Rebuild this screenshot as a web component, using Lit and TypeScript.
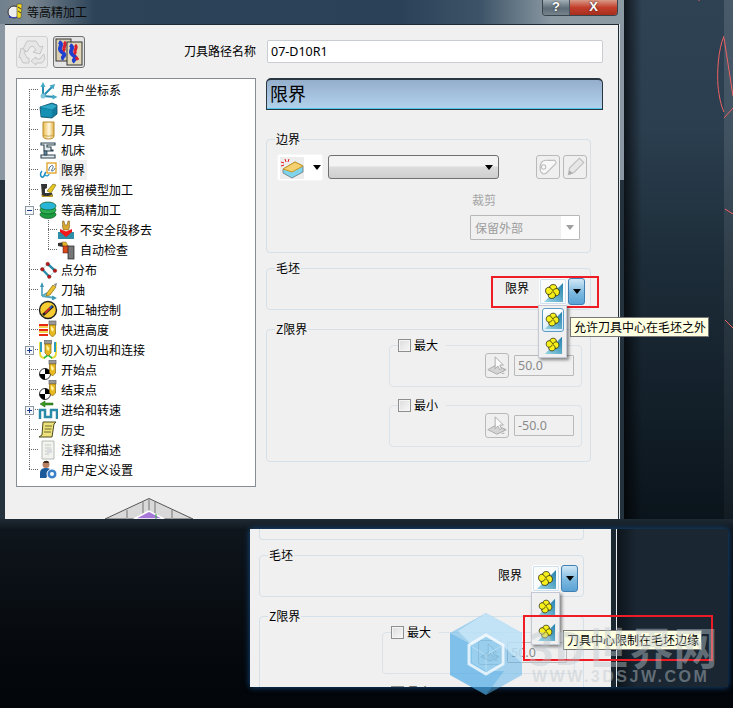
import { LitElement, html, css, svg } from "lit";
import { customElement } from "lit/decorators.js";
import { classMap } from "lit/directives/class-map.js";

const toolBit = (x = 0, y = 0) => svg`<g transform="translate(${x} ${y})"><rect x="3" y="0" width="7" height="4" fill="#9a9a9a" stroke="#555" stroke-width=".6"/><path d="M3.5 4h6v9l-3 3-3-3z" fill="#e8b820" stroke="#8a6a10" stroke-width=".7"/><path d="M5 5l3 3-1 3-2-2z" fill="#fff2a0"/></g>`;
const ball = svg`<circle cx="7" cy="14" r="5.5" fill="#fff" stroke="#000" stroke-width=".8"/><path d="M7 14V8.5A5.5 5.5 0 0 1 12.5 14zM7 14v5.5A5.5 5.5 0 0 1 1.5 14z" fill="#000"/>`;

const icons: Record<string, unknown> = {
  coord: svg`<path d="M5 16V6M5 16l12 1M5 16l9-9" stroke="#2a8db0" stroke-width="2" fill="none"/><path d="M5 2 2.500 7h5zM19.500 17l-5-2.600v5zM17 4l-5.500 1.500 4 4z" fill="#45a9c6"/><circle cx="5" cy="16" r="2.500" fill="#7cc5da"/>`,
  stock: svg`<path d="M2 7l12-4 5 2v9l-5 4-11-1z" fill="#127a9c" stroke="#0b4f68" stroke-width=".8"/><path d="M2 7l12-3 5 2-5 3.500z" fill="#2fa9c8"/><path d="M3 8l11 2v7L3 16z" fill="#1690b2"/>`,
  tool: svg`<defs><linearGradient id="tg"><stop offset="0" stop-color="#e9b94a"/><stop offset=".55" stop-color="#fff8e0"/><stop offset="1" stop-color="#e2b040"/></linearGradient></defs><path d="M5 2h11v14c0 2-2 3-5.500 3S5 18 5 16z" fill="url(#tg)" stroke="#b58a2a"/><path d="M5.500 15c2 1.500 8 1.500 10 0" fill="none" stroke="#c7a24a"/>`,
  machine: svg`<path d="M3 3h14v2H9v2h4v3h2v1H6V5H3zM3 15h14v3H3z" fill="#e4eaec" stroke="#2c4250" stroke-width="1.100"/><path d="M6 11h3v4H6z" fill="#5f8496" stroke="#2c4250" stroke-width=".8"/>`,
  limit: svg`<path d="M4 11c-3 3-1 7 1 6s1-3 3-5" fill="none" stroke="#1a8cc4" stroke-width="1.500"/><rect x="9" y="3" width="9" height="10" fill="#fff" stroke="#e0a020" stroke-width="1.300"/><path d="M11 11c-1-3 3-7 4-5s-3 5-1 5 3-3 3-3" fill="none" stroke="#3a6a8a"/><path d="M7 15c2 2 4 0 4-1" fill="none" stroke="#2a9cc8" stroke-width="1.300"/>`,
  rest: svg`<path d="M3 4h6v4l-2 1v4h7l1 3H4z" fill="#333"/><path d="M9 11l6-7 3 1-5 8z" fill="#e6c820" stroke="#6a5a10" stroke-width=".6"/><path d="M3 14c3 3 8 3 11 0l1 3H4z" fill="#b89a20"/>`,
  strat: svg`<ellipse cx="10" cy="14.500" rx="8" ry="4" fill="#1c9a40" stroke="#0d5a20" stroke-width=".7"/><ellipse cx="10" cy="10" rx="8" ry="4" fill="#2cb050" stroke="#0d5a20" stroke-width=".7"/><ellipse cx="10" cy="6" rx="8" ry="4" fill="#29b5d8" stroke="#0d5a20" stroke-width=".7"/>`,
  unsafe: svg`<rect x="1" y="12" width="16" height="7" fill="#2f8ea8"/><path d="M5.500 1h1.500l1 4h2l1-4h1.500v6l-1 3H6.500l-1-3z" fill="#d8a830" stroke="#6a4a10" stroke-width=".5"/><path d="M3 9l6 2.500 6-2.500v3l-6 5-6-5z" fill="#f01818"/>`,
  check: svg`<path d="M1 3l7-1v4l-2 1-5-1z" fill="#333"/><path d="M5 2l4 0 2 4-5 1z" fill="#e8b020" stroke="#664" stroke-width=".5"/><rect x="6" y="6" width="6" height="7" fill="#d84818" stroke="#511" stroke-width=".5"/><rect x="11" y="6" width="6" height="13" fill="#777" stroke="#222" stroke-width=".7"/>`,
  points: svg`<path d="M9.700 4 17 10.700M4.300 9.300l7 7.400" stroke="#2a8aa8" stroke-width="2.400"/><path d="M9.700 4 4.300 9.300M17 10.700l-5.700 6" stroke="#9ac8d8" stroke-width=".8"/><g fill="#c01818" stroke="#511" stroke-width=".4"><circle cx="9.700" cy="4" r="1.800"/><circle cx="4.300" cy="9.300" r="1.800"/><circle cx="17" cy="10.700" r="1.800"/><circle cx="11.300" cy="16.700" r="1.800"/></g>`,
  axis: svg`<path d="M4 16V6M4 16l13 2M4 16l5-3" stroke="#5aa8c0" stroke-width="1.800" fill="none"/><path d="M4 2 2 7h4zM19 18l-5-2.500v5z" fill="#3a98b4"/><path d="M9 13l6-8 3 2-6 8-4 1z" fill="#e8c030" stroke="#866a10" stroke-width=".7"/><path d="M16 4l3-1-1 4z" fill="#888"/>`,
  ctrl: svg`<circle cx="10" cy="10" r="8.500" fill="#f6cc30" stroke="#222" stroke-width="1.400"/><path d="M5 15 15 6" stroke="#222" stroke-width="3"/><path d="M7 13l5-5" stroke="#d03028" stroke-width="1.800"/><path d="M12 8l2-2" stroke="#2a60c8" stroke-width="1.800"/>`,
  rapid: svg`<path d="M1 5h9M1 10h9M1 15h9" stroke="#e82810" stroke-width="2"/><path d="M1 7h9M1 12h9" stroke="#f0c820" stroke-width="1.300"/>${toolBit(8, 1)}`,
  lead: svg`<path d="M2 2v11c0 3 2 5 5 5M18 2v11c0 3-2 5-5 5" fill="none" stroke="#e8d830" stroke-width="1.800"/><path d="M2 2h2v10H2zM16 2h2v10h-2z" fill="#2a9cc0"/><path d="M6 18l4-3 4 3" fill="none" stroke="#30c040" stroke-width="1.800"/><g transform="translate(3.500 0)">${toolBit()}</g>`,
  start: svg`${ball}${toolBit(8, 0)}`,
  feed: svg`<path d="M2 19V10h5v7h6v-7h6v9" fill="none" stroke="#2a8aa8" stroke-width="2.500"/><path d="M2 4l5-3v2h8v2H7v2z" fill="#3a9a20" stroke="#1a5a10" stroke-width=".5"/>`,
  hist: svg`<path d="M5 2h13l-2 2-2 13H1l3-2z" fill="#efe27a" stroke="#4a4a20"/><path d="M7 6h7M6.500 9h7M6 12h7" stroke="#6a6a30"/>`,
  notes: svg`<path d="M4 1h12v18H4z" fill="#f2f2ee" stroke="#b8bcb8"/><path d="M7 5h6M7 8h6M7 11h6M7 14h4" stroke="#c8c8c0"/><rect x="9" y="9" width="5" height="4" fill="#d8dce0"/>`,
  user: svg`<circle cx="8" cy="4.500" r="3.500" fill="#b88060"/><path d="M5 3c1-3 6-3 6 0z" fill="#3a2a20"/><path d="M2 13c0-4 3-5 6-5s5 1 5 3l-5 7H2z" fill="#1a5a98"/><circle cx="14" cy="14" r="5" fill="#3a80c8" stroke="#fff"/><circle cx="14" cy="14" r="2" fill="#fff"/>`,
};

const ic = (name: string) => html`<svg class="ti" viewBox="0 0 20 20">${icons[name]}</svg>`;

const blade = "M0 .5C-1.500-1-4-3-2.500-5.500-1-7.500 3-7.500 4-5 5-3 3-1 .5.500z";
const fan = () => html`<svg class="fan" viewBox="0 0 22 22">
  <defs><linearGradient id="fanTri" x1="0" y1="1" x2="1" y2="0"><stop offset="0" stop-color="#9ad6e4"/><stop offset="1" stop-color="#2380ae"/></linearGradient></defs>
  <path d="M21 2v19H2z" fill="url(#fanTri)"/>
  <g transform="translate(10.500 10.500)" fill="#f7ef1c" stroke="#2a2a10" stroke-width=".9">
    ${[0, 90, 180, 270].map((a) => svg`<path d=${blade} transform="rotate(${a})"/>`)}
    <circle r="1" fill="#c8b810" stroke="none"/>
  </g>
</svg>`;

const disabledBtn = () => html`<svg class="di" viewBox="0 0 24 24">
  <path d="M2 16l9-5 11 5-10 5z" fill="#d4d4d4" stroke="#aaa"/>
  <path d="M10 2v13l3-3 2 4 2-1-2-4h4z" fill="#fbfbfb" stroke="#a8a8a8"/>
  <path d="M19 15c2 1 1 2 0 3M17 20h3" stroke="#aaa" fill="none"/>
</svg>`;

interface Row { t: string; i: string; kind?: "child" | "first" | "last"; exp?: "+" | "-"; sel?: boolean; lastChild?: boolean }
const rows: Row[] = [
  { t: "用户坐标系", i: "coord", kind: "first" },
  { t: "毛坯", i: "stock" },
  { t: "刀具", i: "tool" },
  { t: "机床", i: "machine" },
  { t: "限界", i: "limit", sel: true },
  { t: "残留模型加工", i: "rest" },
  { t: "等高精加工", i: "strat", exp: "-" },
  { t: "不安全段移去", i: "unsafe", kind: "child" },
  { t: "自动检查", i: "check", kind: "child", lastChild: true },
  { t: "点分布", i: "points" },
  { t: "刀轴", i: "axis" },
  { t: "加工轴控制", i: "ctrl" },
  { t: "快进高度", i: "rapid" },
  { t: "切入切出和连接", i: "lead", exp: "+" },
  { t: "开始点", i: "start" },
  { t: "结束点", i: "start" },
  { t: "进给和转速", i: "feed", exp: "+" },
  { t: "历史", i: "hist" },
  { t: "注释和描述", i: "notes" },
  { t: "用户定义设置", i: "user", kind: "last" },
];

@customElement("app-root")
export class AppRoot extends LitElement {
  static styles = css`
    :host { display: block; position: relative; width: 733px; height: 708px; overflow: hidden;
      background: linear-gradient(#10171e 519px, #0c1218 560px, #03060a 690px, #02050a 100%);
      font: 12px/14px "Noto Sans CJK SC", sans-serif; color: #000; }
    * { box-sizing: border-box; }

    .desk { position: absolute; left: 0; top: 0; width: 733px; height: 519px;
      background: linear-gradient(#2e4254 0, #2b3e4f 130px, #1d2d39 260px, #13202a 400px, #0b141b 100%); }
    .desk::before { content: ""; position: absolute; left: 624px; top: 0; bottom: 0; width: 18px;
      background: linear-gradient(to right, rgba(0,0,0,.65), transparent); }
    .desk::after { content: ""; position: absolute; left: 724px; top: 0; bottom: 0; width: 9px;
      background: linear-gradient(rgba(255,255,255,.13), rgba(255,255,255,.03)); }
    .arcs { position: absolute; left: 690px; top: 0; width: 43px; height: 340px; z-index: 1; }
    .strip { position: absolute; left: 0; top: 519px; width: 733px; height: 10px;
      background: linear-gradient(#1e2a33, #10181f); }

    .win1 { position: absolute; left: 0; top: 0; width: 624px; height: 519px; overflow-y: clip;
      display: flex; flex-direction: column;
      background: linear-gradient(#8b98a3 0 180px, #24323e 180px); }
    .title { height: 24px; flex: none; display: flex; align-items: flex-start; gap: 3px; padding: 3px 0 0 7px;
      background: linear-gradient(to right, #70808c 0, #7b8892 28px, #2c4358 95px, #2b4158 400px, #3d5468 480px, #8a98a2 552px, #8c9aa4 100%); }
    .title svg { width: 17px; height: 17px; flex: none; }
    .title span { line-height: 16px; margin-top: 1px; color: #0a0a0a; }
    .caps { margin-left: auto; margin-right: 6px; margin-top: -3px; display: flex; height: 16px;
      border: 1px solid #39434b; border-top: 0; border-radius: 0 0 4px 4px; overflow: hidden; }
    .cap { font: bold 13px/13px "Liberation Sans", sans-serif; color: #fff; text-align: center; text-shadow: 0 0 2px #222; }
    .cap.q { width: 27px; background: linear-gradient(#a3aeb5, #5d6c77 55%, #75838c); border-right: 1px solid #4a555d; }
    .cap.x { width: 47px; background: linear-gradient(#d89a88, #c33f2b 50%, #a72e1e); }

    .client { margin-left: 5px; width: 614px; flex: 1; min-height: 0; padding: 11px 0 0 11px;
      background: #f0f0f0; border-top: 1px solid #1f2a33; border-right: 1px solid #1f2a33;
      box-shadow: 1px 0 0 #dfe6ea; display: flex; flex-direction: column; }
    .head { display: flex; height: 32px; }
    .tools { width: 240px; display: flex; gap: 5px; }
    .tbtn { width: 32px; height: 32px; border-radius: 3px; border: 1px solid #cfcfcf; display: flex; align-items: center; justify-content: center; background: #ececec; }
    .tbtn.on { border-color: #707070; background: #e4e4e4; }
    .tbtn svg { width: 28px; height: 28px; }
    .pathlabel { margin-left: auto; align-self: center; margin-top: -2px; }
    .name { margin: 4px 0 0 11px; width: 336px; height: 23px; background: #fff; border: 1px solid #c9ccd0; border-radius: 2px;
      padding-left: 3px; font: 12.500px/21px "Noto Sans", sans-serif; }

    .main { display: flex; gap: 10px; margin-top: 10px; }
    .leftcol { width: 240px; }
    .tree { height: 409px; background: #fff; border: 1px solid #868d94; padding-top: 1px; }
    .row { display: flex; height: 20px; align-items: center; }
    .gut { width: 21px; height: 20px; flex: none; display: flex; align-items: center; padding-left: 8px;
      background:
        repeating-linear-gradient(to bottom, #666 0 1px, transparent 1px 2px) 12px 0 / 1px 100% no-repeat,
        repeating-linear-gradient(to right, #666 0 1px, transparent 1px 2px) 12px 9px / 9px 1px no-repeat; }
    .row.first .gut { background:
        repeating-linear-gradient(to bottom, #666 0 1px, transparent 1px 2px) 12px 9px / 1px 11px no-repeat,
        repeating-linear-gradient(to right, #666 0 1px, transparent 1px 2px) 12px 9px / 9px 1px no-repeat; }
    .row.last .gut { background:
        repeating-linear-gradient(to bottom, #666 0 1px, transparent 1px 2px) 12px 0 / 1px 10px no-repeat,
        repeating-linear-gradient(to right, #666 0 1px, transparent 1px 2px) 12px 9px / 9px 1px no-repeat; }
    .row.child .gut { width: 40px; background:
        repeating-linear-gradient(to bottom, #666 0 1px, transparent 1px 2px) 12px 0 / 1px 100% no-repeat,
        repeating-linear-gradient(to bottom, #666 0 1px, transparent 1px 2px) 31px 0 / 1px 100% no-repeat,
        repeating-linear-gradient(to right, #666 0 1px, transparent 1px 2px) 31px 9px / 9px 1px no-repeat; }
    .row.child.lc .gut { background:
        repeating-linear-gradient(to bottom, #666 0 1px, transparent 1px 2px) 12px 0 / 1px 100% no-repeat,
        repeating-linear-gradient(to bottom, #666 0 1px, transparent 1px 2px) 31px 0 / 1px 10px no-repeat,
        repeating-linear-gradient(to right, #666 0 1px, transparent 1px 2px) 31px 9px / 9px 1px no-repeat; }
    .exp { width: 9px; height: 9px; display: block; }
    .ti { width: 20px; height: 20px; flex: none; }
    .lbl { margin-left: 1px; padding: 0 2px; line-height: 20px; height: 20px; }
    .row.picked .lbl { background: #f0f0f0; }
    .peek { display: block; margin: 11px 0 0 89px; width: 88px; height: 21px; }

    .rightcol { width: 337px; }
    .banner { height: 32px; border: 1px solid #2a3640; border-top-width: 2px; border-radius: 5px 5px 0 0;
      background: linear-gradient(#94aecb, #b3d3ed); box-shadow: inset 0 -1px 0 #4fc4f0;
      font-size: 18px; line-height: 27px; padding-left: 3px; }
    .group { width: 325px; border: 1px solid #d6e0e8; border-radius: 4px; }
    .bounds { margin-top: 29px; height: 114px; }
    .blank { margin-top: 15px; height: 42px; }
    .zlim { margin-top: 19px; height: 133px; }
    .legend { display: block; width: max-content; margin: -8px 0 0 8px; padding: 0 1px; height: 14px; line-height: 14px; background: #f0f0f0; }

    .brow { display: flex; margin: 8px 0 0 10px; }
    .typeBtn { width: 46px; height: 27px; background: #fff; border: 1px solid #f4f6f8; border-radius: 2px; display: flex; align-items: center; padding-left: 2px; gap: 9px; }
    .typeBtn svg { width: 24px; height: 22px; background: #ededed; flex: none; }
    .down { width: 0; height: 0; border: 4px solid transparent; border-top: 5px solid #000; border-bottom: 0; flex: none; }
    .combo { width: 171px; height: 24px; margin: 1px 0 0 5px; border: 1px solid #707070; border-radius: 3px;
      background: linear-gradient(#f3f3f3 0 10px, #dcdcdc 11px, #cfcfcf); display: flex; align-items: center; justify-content: flex-end; padding-right: 5px; }
    .sq { width: 24px; height: 24px; border: 1px solid #b9b9b9; border-radius: 3px; margin-top: 1px; background: #efefef; display: flex; align-items: center; justify-content: center; }
    .sq svg { width: 22px; height: 22px; }
    .sq.first { margin-left: 37px; }
    .sq.next { margin-left: 3px; }
    .cut { margin: 12px 0 0 205px; color: #a6a6a6; }
    .dropsel { width: 110px; height: 25px; margin: 8px 0 0 203px; border: 1px solid #b7b7b7; border-radius: 1px; display: flex; color: #9c9c9c; line-height: 23px; }
    .dropsel span { flex: 1; padding-left: 4px; }
    .dropsel i { width: 18px; background: #fff; display: flex; align-items: center; justify-content: center; }
    .dropsel i b { width: 0; height: 0; border: 4px solid transparent; border-top: 5px solid #a0a0a0; border-bottom: 0; }

    .blankrow { display: flex; justify-content: flex-end; margin-top: 3px; padding-right: 5px; }
    .limit { position: relative; display: flex; align-items: center; }
    .limit .t { margin: -7px 10px 0 0; }
    .fb { width: 28px; height: 27px; background: #fafbfc; border: 1px solid #fff; box-shadow: 0 0 0 1px #cfe0ee inset; border-radius: 2px; display: flex; align-items: center; justify-content: center; }
    .fan { width: 22px; height: 22px; display: block; }
    .ab { width: 17px; height: 27px; margin-left: 1px; border: 1px solid #3f7fb4; border-radius: 3px; background: linear-gradient(#d2e8f6, #7db9e0 55%, #5aa2d4); display: flex; align-items: center; justify-content: center; }
    .menu { position: absolute; left: 33px; top: 27px; width: 29px; height: 53px; z-index: 3; background: #f0f0f0;
      border: 1px solid #c4c7d4; box-shadow: 2px 2px 3px rgba(0,0,0,.45); padding: 2px 2px 0 3px; display: flex; flex-direction: column; gap: 1px; }
    .mi { width: 22px; height: 24px; display: flex; align-items: center; justify-content: center; border: 1px solid transparent; border-radius: 3px; }
    .mi.on { border-color: #5e9cc8; background: linear-gradient(#fff, #dceefa); }
    .tip { position: absolute; left: 31px; width: 139px; height: 20px; background: #ffffe1; border: 1px solid #767676; padding-left: 3px; line-height: 18px; white-space: nowrap; z-index: 4; }
    .redA { position: absolute; left: -14px; right: -14px; top: -2px; bottom: -3px; border: 2px solid #ee1c25; z-index: 2; pointer-events: none; }
    .redB { position: absolute; left: -9px; top: 22px; width: 190px; height: 46px; border: 2px solid #ee1c25; z-index: 5; pointer-events: none; }

    .sub { margin: 9px 0 0 122px; width: 193px; height: 42px; border: 1px solid #dbe3ea; border-radius: 4px; }
    .sub + .sub { margin-top: 18px; }
    .subleg { display: flex; align-items: center; gap: 3px; width: max-content; height: 14px; margin: -8px 0 0 8px; padding: 0 8px 0 0; background: #f0f0f0; }
    .cb { width: 13px; height: 13px; border: 1px solid #8e8f8f; background: linear-gradient(135deg, #dcdcdc, #f8f8f8); box-shadow: inset 0 0 0 1px #f4f4f4; }
    .subrow { display: flex; justify-content: flex-end; gap: 5px; margin-top: 1px; padding-right: 7px; }
    .subrow .sq { height: 25px; margin: 0; }
    .num { width: 60px; height: 21px; margin-top: 2px; border: 1px solid #b9b9b9; border-radius: 1px; padding-left: 3px; color: #8a8a8a; font: 12.500px/19px "Noto Sans", sans-serif; }

    .win2 { position: absolute; left: 250px; top: 529px; width: 478px; height: 158px; overflow-y: clip; display: flex;
      background: #17232e; box-shadow: 0 0 6px 0 #14508c; }
    .client2 { width: 360px; flex: none; background: #f0f0f0; padding-left: 9px; position: relative; }
    .tail { width: 325px; height: 11px; border: 1px solid #d6e0e8; border-top: 0; border-radius: 0 0 4px 4px; }
    .frame2 { width: 7px; flex: none; background: #1b2731; border-left: 1px solid #e8edf0; border-right: 1px solid #e8edf0; }
    .rest2 { flex: 1; background: linear-gradient(to right, #0d141b, #1a2733 20px); }

    .wm { position: absolute; left: 450px; top: 613px; width: 262px; height: 82px; z-index: 6; pointer-events: none; }
    .wm svg { width: 72px; height: 82px; display: block; }
    .wmT { position: absolute; left: 78px; top: 8px; font: bold 44px/50px "Noto Sans CJK SC", sans-serif; color: rgba(190,200,206,.45); white-space: nowrap; }
    .wmU { position: absolute; left: 82px; top: 56px; font: bold 16px/16px "Liberation Sans", sans-serif; letter-spacing: 2.500px; color: rgba(190,200,206,.45); white-space: nowrap; }
  `;

  private blank(second: boolean) {
    return html`<div class="group blank">
      <span class="legend">毛坯</span>
      <div class="blankrow">
        <div class="limit">
          <span class="t">限界</span>
          <div class="fb">${fan()}</div>
          <div class="ab"><span class="down"></span></div>
          ${second ? "" : html`<div class="redA"></div>`}
          <div class="menu">
            <div class=${classMap({ mi: true, on: !second })}>${fan()}</div>
            <div class="mi">${fan()}</div>
            ${second
              ? html`<div class="tip" style="top:37px">刀具中心限制在毛坯边缘</div><div class="redB"></div>`
              : html`<div class="tip" style="top:11px">允许刀具中心在毛坯之外</div>`}
          </div>
        </div>
      </div>
    </div>`;
  }

  private zlim() {
    const sub = (label: string, v: string) => html`<div class="sub">
      <div class="subleg"><span class="cb"></span><span>${label}</span></div>
      <div class="subrow"><div class="sq">${disabledBtn()}</div><div class="num">${v}</div></div>
    </div>`;
    return html`<div class="group zlim">
      <span class="legend">Z限界</span>
      ${sub("最大", "50.0")}
      ${sub("最小", "-50.0")}
    </div>`;
  }

  render() {
    return html`
      <div class="desk">
        <svg class="arcs" viewBox="0 0 43 340" fill="none" stroke="#ee6262" stroke-width="1">
          <path d="M8 0h2M34 36C28 50 27 72 28 86c1 10 3 20 6 26M34 38l9 58M34 118l9-10M35 209l8 5M35 320l8 8"/>
        </svg>
      </div>
      <div class="strip"></div>

      <div class="win1">
        <div class="title">
          <svg viewBox="0 0 17 17"><circle cx="7" cy="9" r="6" fill="#eee" stroke="#333"/><path d="M2 12c3 3 7 3 10 0v3H2z" fill="#3a44b0"/><path d="M10 1h5l-1 14h-4z" fill="#f2dc20" stroke="#444" stroke-width=".6"/><path d="M11 4l3 2M11 8l3 2" stroke="#333"/></svg>
          <span>等高精加工</span>
          <div class="caps"><div class="cap q">?</div><div class="cap x">X</div></div>
        </div>
        <div class="client">
          <div class="head">
            <div class="tools">
              <div class="tbtn">
                <svg viewBox="0 0 28 28" fill="#e6e6e6" stroke="#c6c6c6" stroke-linejoin="round">
                  <path d="M9 3h9l4 6 3-1-3 8-7-2 3-2-3-4-3 1-3 5-4-3z"/>
                  <path d="M26 16l1 5-3 4h-6v2l-5-4 5-4v2h4l2-3z"/>
                  <path d="M3 10l5 3-2 1 3 6h2v5H5l-3-6-1 1z"/>
                </svg>
              </div>
              <div class="tbtn on">
                <svg viewBox="0 0 28 28">
                  <rect x="1" y="1" width="15" height="22" fill="#d8d0b0" stroke="#333"/>
                  <path d="M4 4c6 3-3 6 3 10s-2 5 2 7" stroke="#2040d0" stroke-width="4" fill="none"/>
                  <path d="M9 4c4 3-3 6 1 9" stroke="#d82030" stroke-width="3" fill="none"/>
                  <rect x="12" y="4" width="15" height="23" fill="#e0d8b8" stroke="#333"/>
                  <path d="M15 7c6 3-3 6 3 10s-2 4 2 7" stroke="#2040d0" stroke-width="4" fill="none"/>
                  <path d="M20 7c4 3-3 6 1 9M21 19l2 3" stroke="#d82030" stroke-width="3" fill="none"/>
                </svg>
              </div>
              <span class="pathlabel">刀具路径名称</span>
            </div>
            <div class="name">07-D10R1</div>
          </div>
          <div class="main">
            <div class="leftcol">
              <div class="tree">
                ${rows.map((r) => html`<div class=${classMap({ row: true, first: r.kind === "first", last: r.kind === "last", child: r.kind === "child", lc: !!r.lastChild, picked: !!r.sel })}>
                  <span class="gut">${r.exp
                    ? html`<svg class="exp" viewBox="0 0 9 9"><rect x=".5" y=".5" width="8" height="8" fill="#f4f6f8" stroke="#8e99a6"/><path d=${r.exp === "+" ? "M2 4.500h5M4.500 2v5" : "M2 4.500h5"} stroke="#1c3a8c"/></svg>`
                    : ""}</span>
                  ${ic(r.i)}
                  <span class="lbl">${r.t}</span>
                </div>`)}
              </div>
              <svg class="peek" viewBox="0 0 88 21">
                <path d="M44 .5L0 21h88z" fill="#d9d9d9" stroke="#555"/>
                <path d="M44 1v12M50 4v14M38 4v14M22 12v9M67 12v9" stroke="#a6a6a6" stroke-width="2"/>
                <path d="M44 13l-15 8h30z" fill="#a878d8" stroke="#fff" stroke-width="1.500"/>
                <path d="M51 16v5" stroke="#30b040"/>
              </svg>
            </div>
            <div class="rightcol">
              <div class="banner">限界</div>
              <div class="group bounds">
                <span class="legend">边界</span>
                <div class="brow">
                  <div class="typeBtn">
                    <svg viewBox="0 0 24 22"><path d="M3 12l12-7 8 4v6l-11 6-9-5z" fill="#7fd3ea" stroke="#555" stroke-width=".6"/><path d="M3 12l12-7 8 4-11 6z" fill="#f4d070" stroke="#c89820"/><path d="M5 2l1 3M1 5l3 1M9 2l-1 3M1 9l3-1" stroke="#e81818"/></svg>
                    <span class="down"></span>
                  </div>
                  <div class="combo"><span class="down"></span></div>
                  <div class="sq first"><svg viewBox="0 0 20 20" fill="none" stroke="#bdbdbd"><path d="M10 4C4 3 2 8 3 13c1 4 4 4 6 2l8-8c1-2-1-4-3-3z" fill="#f8f8f8"/><circle cx="6" cy="10" r="2"/></svg></div>
                  <div class="sq next"><svg viewBox="0 0 20 20"><path d="M14 2l4 4-9 9-5 2 1-6z" fill="#e6e6e6" stroke="#bdbdbd"/><path d="M4 17l1-4 3 3z" fill="#aaa"/></svg></div>
                </div>
                <div class="cut">裁剪</div>
                <div class="dropsel"><span>保留外部</span><i><b></b></i></div>
              </div>
              ${this.blank(false)}
              ${this.zlim()}
            </div>
          </div>
        </div>
      </div>

      <div class="win2">
        <div class="client2">
          <div class="tail"></div>
          ${this.blank(true)}
          ${this.zlim()}
        </div>
        <div class="frame2"></div>
        <div class="rest2"></div>
      </div>

      <div class="wm">
        <svg viewBox="0 0 72 82">
          <path d="M36 0l36 20v42L36 82 0 62V20z" fill="#56b2ea" fill-opacity=".5"/>
          <path d="M36 0l36 20v30L52 32 36 24 22 32 8 18z" fill="#cfe9f9" fill-opacity=".7"/>
          <path d="M0 20l22 12v18l14 8 18 0-18 24L0 62z" fill="#46a8e6" fill-opacity=".4"/>
          <path d="M36 22l17 10v19L36 61 19 51V32z" fill="#8accf0" fill-opacity=".35" stroke="#fff" stroke-opacity=".75" stroke-width="3"/>
          <path d="M36 42V61M36 42l17-10M36 42L19 32" stroke="#fff" stroke-opacity=".3"/>
        </svg>
        <div class="wmT">3D世界网</div>
        <div class="wmU">WWW.3DSJW.COM</div>
      </div>
    `;
  }
}
